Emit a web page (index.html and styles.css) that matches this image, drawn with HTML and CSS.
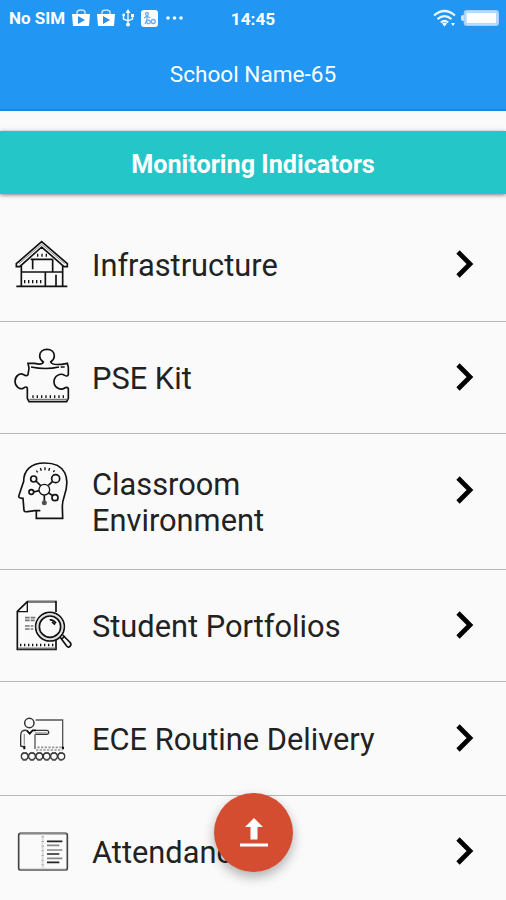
FILE: index.html
```html
<!DOCTYPE html>
<html lang="en">
<head>
<meta charset="utf-8">
<title>Monitoring Indicators</title>
<link rel="stylesheet" href="styles.css">
</head>
<body>
<div class="screen">
  <header class="header">
    <div class="status">
      <div class="status-left">
        <span class="carrier">No SIM</span>
        <svg class="bag" viewBox="0 0 18 18"><path d="M5 6V3.500Q5 1 9 1t4 2.500V6" fill="none" stroke="#c5e3ff" stroke-width="1.500"/><path d="M0 5h18l-1 12H1z" fill="#fff"/><path d="M6 7l7 4-7 4z" fill="#2f8ee8"/></svg>
        <svg class="bag" viewBox="0 0 18 18"><path d="M5 6V3.500Q5 1 9 1t4 2.500V6" fill="none" stroke="#c5e3ff" stroke-width="1.500"/><path d="M0 5h18l-1 12H1z" fill="#fff"/><path d="M6 7l7 4-7 4z" fill="#2f8ee8"/></svg>
        <svg class="usb" viewBox="0 0 12 18"><path d="M6 2v13M1.500 6v4L6 12l4.500-2V6" fill="none" stroke="#e5f3ff" stroke-width="1.500"/><path d="M6 0l2.500 4h-5z" fill="#fff"/><circle cx="6" cy="15.500" r="2" fill="#fff"/><circle cx="1.700" cy="6" r="1.400" fill="#fff"/><path d="M9 5h3v3H9z" fill="#fff"/></svg>
        <svg class="app" viewBox="0 0 17 17"><rect width="17" height="17" rx="3" fill="#fff"/><g fill="none" stroke="#67aef0" stroke-width="1.300"><circle cx="6" cy="4" r="1.500"/><path d="M3 8l3-2 3 2M6 6v4l-2 4"/><circle cx="7.500" cy="12" r="1.800"/><circle cx="12.300" cy="11.500" r="2"/></g></svg>
        <svg class="dots" viewBox="0 0 17 4" fill="#fff"><circle cx="2" cy="2" r="1.800"/><circle cx="8.500" cy="2" r="1.800"/><circle cx="15" cy="2" r="1.800"/></svg>
      </div>
      <span class="clock">14:45</span>
      <div class="status-right">
        <svg class="wifi" viewBox="0 0 24 18"><g fill="none" stroke="#e8f5ff" stroke-width="2.200"><path d="M1 6.500q10.500-9 21 0M4.500 10.200q7-6 14 0M7.800 13.500q3.700-3 7.400 0"/></g><path d="M9 14.500q2.500-1.500 5 0L11.500 17.500zM18 14h4l-2 3z" fill="#fff"/></svg>
        <svg class="battery" viewBox="0 0 38 16"><rect x="0" y="5" width="4" height="6" rx="2" fill="#cfe8ff"/><rect x="3.500" y=".8" width="33.700" height="14.400" rx="2.500" fill="#fff" stroke="#a5d1fb" stroke-width="1.600"/><rect x="4.900" y="2.200" width="30.900" height="11.600" fill="none" stroke="#a9d3fb" stroke-width="1.400"/></svg>
      </div>
    </div>
    <h1 class="school">School Name-65</h1>
  </header>

  <h2 class="banner">Monitoring Indicators</h2>

  <main class="list">
    <div class="row">
      <svg class="icon" viewBox="0 0 240 240" fill="none" stroke="#111" stroke-width="5"><path d="M49 116L125 50l77 66v9h-10L125 66 59 125H49z" stroke-width="5"/><path d="M57 116L125 58l69 58" stroke="#888" stroke-width="3"/><path d="M64 122v61M188 122v61M49 184h153M64 141h124M92 103h66M98 105v28M158 103v38M136 142v41M168 149v34"/><path d="M72 170h59" stroke-width="10" stroke-dasharray="4 8"/><path d="M111 91h34" stroke-width="9" stroke-dasharray="4 9"/></svg>
      <span class="label">Infrastructure</span>
      <svg class="chevron" viewBox="0 0 18 28"><path d="M2 2l12 12L2 26"/></svg>
    </div>
    <div class="row">
      <svg class="icon" viewBox="0 9 240 240" fill="none" stroke="#111" stroke-width="5"><path d="M84 85h20q22 6 26-4Q119 73 119 63c0-12 9-20 22-20s22 8 22 20q0 10-11 18c4 10 20 10 50 4l3 12v22q-3 7-11 2c-14-9-32 3-32 19s18 28 32 19q8-5 11 2v29l-5 10H87l-5-10v-31q-3-6-11 0c-12 7-26-5-26-20s14-27 26-20q8 6 13 0l3-20z"/><path d="M93 96q45 9 84 0M182 96h12" stroke-width="5"/><path d="M88 193h114" stroke="#777" stroke-width="4"/><path d="M97 185h98" stroke-width="8" stroke-dasharray="4 9"/></svg>
      <span class="label">PSE Kit</span>
      <svg class="chevron" viewBox="0 0 18 28"><path d="M2 2l12 12L2 26"/></svg>
    </div>
    <div class="row double">
      <svg class="icon" viewBox="0 0 240 240" fill="none" stroke="#111" stroke-width="5"><path d="M109 184v21h79l-1-37q0-12 6-30c18-54 5-99-59-99-42 0-63 22-63 55l-15 45q0 6 13 6l3 36q0 5 10 4 14-2 22-3h17"/><circle cx="133" cy="119" r="16" stroke-width="4"/><circle cx="101" cy="87" r="9"/><circle cx="167" cy="86" r="12"/><circle cx="94" cy="126" r="7"/><circle cx="165" cy="143" r="9"/><path d="M108 93l14 14M145 106l13-12M101 126l16-4M146 129l12 8M133 136v18"/><circle cx="133" cy="158" r="5" fill="#444" stroke="#555"/><path d="M109 62l4 5M121 54l3 8M135 52v9M149 54l-3 8M164 61l-4 5" stroke-width="4"/></svg>
      <span class="label">Classroom Environment</span>
      <svg class="chevron" viewBox="0 0 18 28"><path d="M2 2l12 12L2 26"/></svg>
    </div>
    <div class="row">
      <svg class="icon" viewBox="0 3 240 240" fill="none" stroke="#111" stroke-width="5"><path d="M168 81V50H82L52 79v114h116v-28"/><path d="M82 51v29H53" stroke-width="4"/><path d="M85 50h80M54 190h112" stroke="#777" stroke-width="5"/><path d="M75 98h31M75 106h29M75 123h25M75 132h25" stroke="#777" stroke-width="5" stroke-dasharray="14 3"/><path d="M60 180h105" stroke-width="8" stroke-dasharray="4 8"/><circle cx="150" cy="125" r="43" fill="#fafafa" stroke-width="5"/><circle cx="150" cy="125" r="37" stroke="#ddd" stroke-width="6"/><circle cx="150" cy="125" r="32"/><path d="M149 105q10-2 19 10M156 111l9 8"/><path d="M180 156l20 27q5 6 10 1t1-11l-23-23M183 164l12-11"/></svg>
      <span class="label">Student Portfolios</span>
      <svg class="chevron" viewBox="0 0 18 28"><path d="M2 2l12 12L2 26"/></svg>
    </div>
    <div class="row tall">
      <svg class="icon" viewBox="0 -6 240 240" fill="none" stroke="#333" stroke-width="4"><circle cx="88" cy="69" r="14" stroke-width="4.500"/><path d="M107 60h81v85" stroke="#555"/><path d="M106 91h34q6 0 6 6t-6 6h-34M80 91q-18-2-18 16v31l10 3" /><path d="M105 103v44" stroke="#555"/><path d="M80 91l9 10 9-10h10" stroke="#111" stroke-width="5"/><path d="M73 102v32M105 99h35" stroke="#999"/><path d="M73 137v11M189 140v8" stroke="#111" stroke-width="6"/><path d="M112 142h73M108 150h80" stroke="#999" stroke-width="5" stroke-dasharray="7 4"/><g stroke="#333"><circle cx="74" cy="169" r="10"/><circle cx="96" cy="169" r="10"/><circle cx="118" cy="169" r="10"/><circle cx="140" cy="169" r="10"/><circle cx="162" cy="169" r="10"/><circle cx="184" cy="169" r="10"/></g><path d="M68 158h120M68 180h120" stroke="#555" stroke-width="4" stroke-dasharray="12 10"/></svg>
      <span class="label">ECE Routine Delivery</span>
      <svg class="chevron" viewBox="0 0 18 28"><path d="M2 2l12 12L2 26"/></svg>
    </div>
    <div class="row">
      <svg class="icon" viewBox="0 -9 240 240" fill="none" stroke="#444" stroke-width="5"><rect x="56" y="55" width="146" height="110" rx="5"/><path d="M60 55h138M60 164h138" stroke="#888"/><path d="M128 58v104" stroke="#ddd" stroke-width="6"/><path d="M128 64v94" stroke="#aaa" stroke-width="7" stroke-dasharray="3 11"/><path d="M141 79h46M141 117h37M141 142h37" stroke="#222"/><path d="M141 91h37M141 105h46M141 130h46" stroke="#888"/></svg>
      <span class="label">Attendance</span>
      <svg class="chevron" viewBox="0 0 18 28"><path d="M2 2l12 12L2 26"/></svg>
    </div>
  </main>
  <button class="fab" aria-label="Upload"><svg viewBox="0 0 28 30"><path d="M14 0l9 9h-5.500v12.500h-7V9H5zM0 25.500h28v3H0z" fill="#fff"/></svg></button>
</div>
</body>
</html>
```
FILE: styles.css
```css
* { box-sizing: border-box; }
body { margin: 0; background: #fafafa; font-family: Roboto, sans-serif; }
.screen { position: relative; height: 900px; overflow: hidden; }
.header { height: 111px; background: #2196f3; border-bottom: 2px solid #148ae6; color: #fff; }
.status { display: grid; grid-template-columns: 1fr auto 1fr; align-items: center; height: 36px; padding: 0 7px 0 9px; }
.status-left { display: flex; align-items: center; }
.status-right { display: flex; align-items: center; justify-content: flex-end; gap: 4px; }
.carrier { width: 63px; font-size: 17px; font-weight: 700; white-space: nowrap; }
.bag { width: 18px; height: 18px; margin-right: 7px; }
.usb { width: 12px; height: 18px; margin-right: 7px; }
.app { width: 17px; height: 17px; margin-right: 8px; }
.dots { width: 17px; height: 4px; }
.clock { position: relative; left: -1px; top: 1px; font-size: 17.2px; font-weight: 700; }
.wifi { width: 24px; height: 18px; }
.battery { width: 38px; height: 16px; }
.school { margin: 25px 0 0; font-size: 22.6px; line-height: 28px; font-weight: 400; text-align: center; }
.banner { height: 63px; margin: 20px 0 15px; background: #24c6c8; box-shadow: 0 1px 4px rgba(0,0,0,.5); color: #fff; font-size: 25.2px; line-height: 67px; font-weight: 700; text-align: center; }
.row { display: flex; align-items: flex-start; height: 112px; padding: 0 32px 0 0; border-bottom: 1px solid #b9b9b9; }
.row:first-child { height: 113px; }
.row.double { height: 136px; }
.row.tall { height: 114px; }
.icon { width: 80px; height: 80px; margin: 16px 12px 0 0; flex: none; }
.label { align-self: center; width: 300px; padding-top: 2px; font-size: 30.8px; line-height: 36px; color: #222; }
.chevron { width: 18px; height: 28px; margin: 41px 0 0 auto; fill: none; stroke: #000; stroke-width: 4.7; }
.double .chevron, .tall .chevron { margin-top: 42px; }
.fab { position: absolute; left: 214px; top: 793px; width: 79px; height: 79px; padding: 0; border: 0; border-radius: 50%; background: #d54d30; box-shadow: 0 5px 12px rgba(0,0,0,.3); display: flex; align-items: center; justify-content: center; }
.fab svg { width: 28px; height: 30px; }
```
